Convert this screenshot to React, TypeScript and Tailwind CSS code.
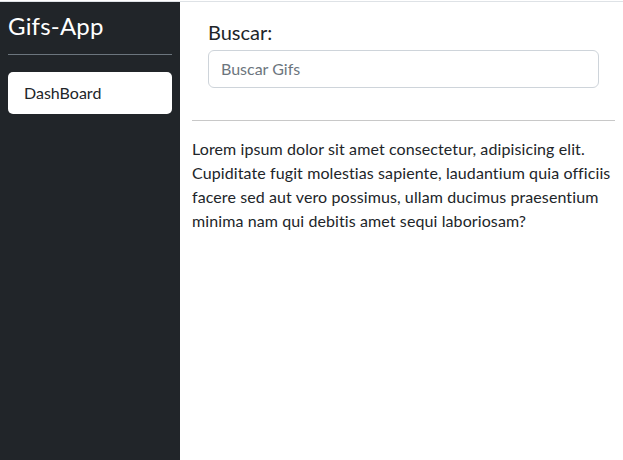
export default function App() {
  return (
    <div className="h-[460px] flex flex-col font-['Lato',sans-serif] text-[#212529]">
      <div className="h-[2px] border-b border-[#dee2e6]"></div>
      <div className="flex flex-1">
        {/* Sidebar */}
        <aside className="w-[180px] bg-[#212529] px-2 pt-[9px] flex flex-col">
          <h1 className="text-[24px] leading-[29px] tracking-[0.2px] text-white">Gifs-App</h1>
          <hr className="mt-[14px] border-t border-[#6c757d]" />
          <button className="mt-[17px] h-[42px] w-full bg-white rounded-[5px] text-left pl-4 text-[16px] text-[#212529]">
            DashBoard
          </button>
        </aside>

        {/* Main */}
        <main className="flex-1 pl-3 pr-2">
          <div className="px-4 pt-[18px]">
            <h5 className="text-[20px] leading-6">Buscar:</h5>
            <input
              type="text"
              placeholder="Buscar Gifs"
              className="mt-[6px] w-full h-[38px] border border-[#ced4da] rounded-[6px] px-3 pb-px text-[16px] placeholder:text-[#6c757d] outline-none"
            />
          </div>
          <hr className="mt-[32px] border-t border-[#c8c8c8]" />
          <p className="mt-[16px] text-[16px] leading-6 tracking-[0.1px]">
            Lorem ipsum dolor sit amet consectetur, adipisicing elit.
            Cupiditate fugit molestias sapiente, laudantium quia officiis
            facere sed aut vero possimus, ullam ducimus praesentium minima nam
            qui debitis amet sequi laboriosam?
          </p>
        </main>
      </div>
    </div>
  );
}
